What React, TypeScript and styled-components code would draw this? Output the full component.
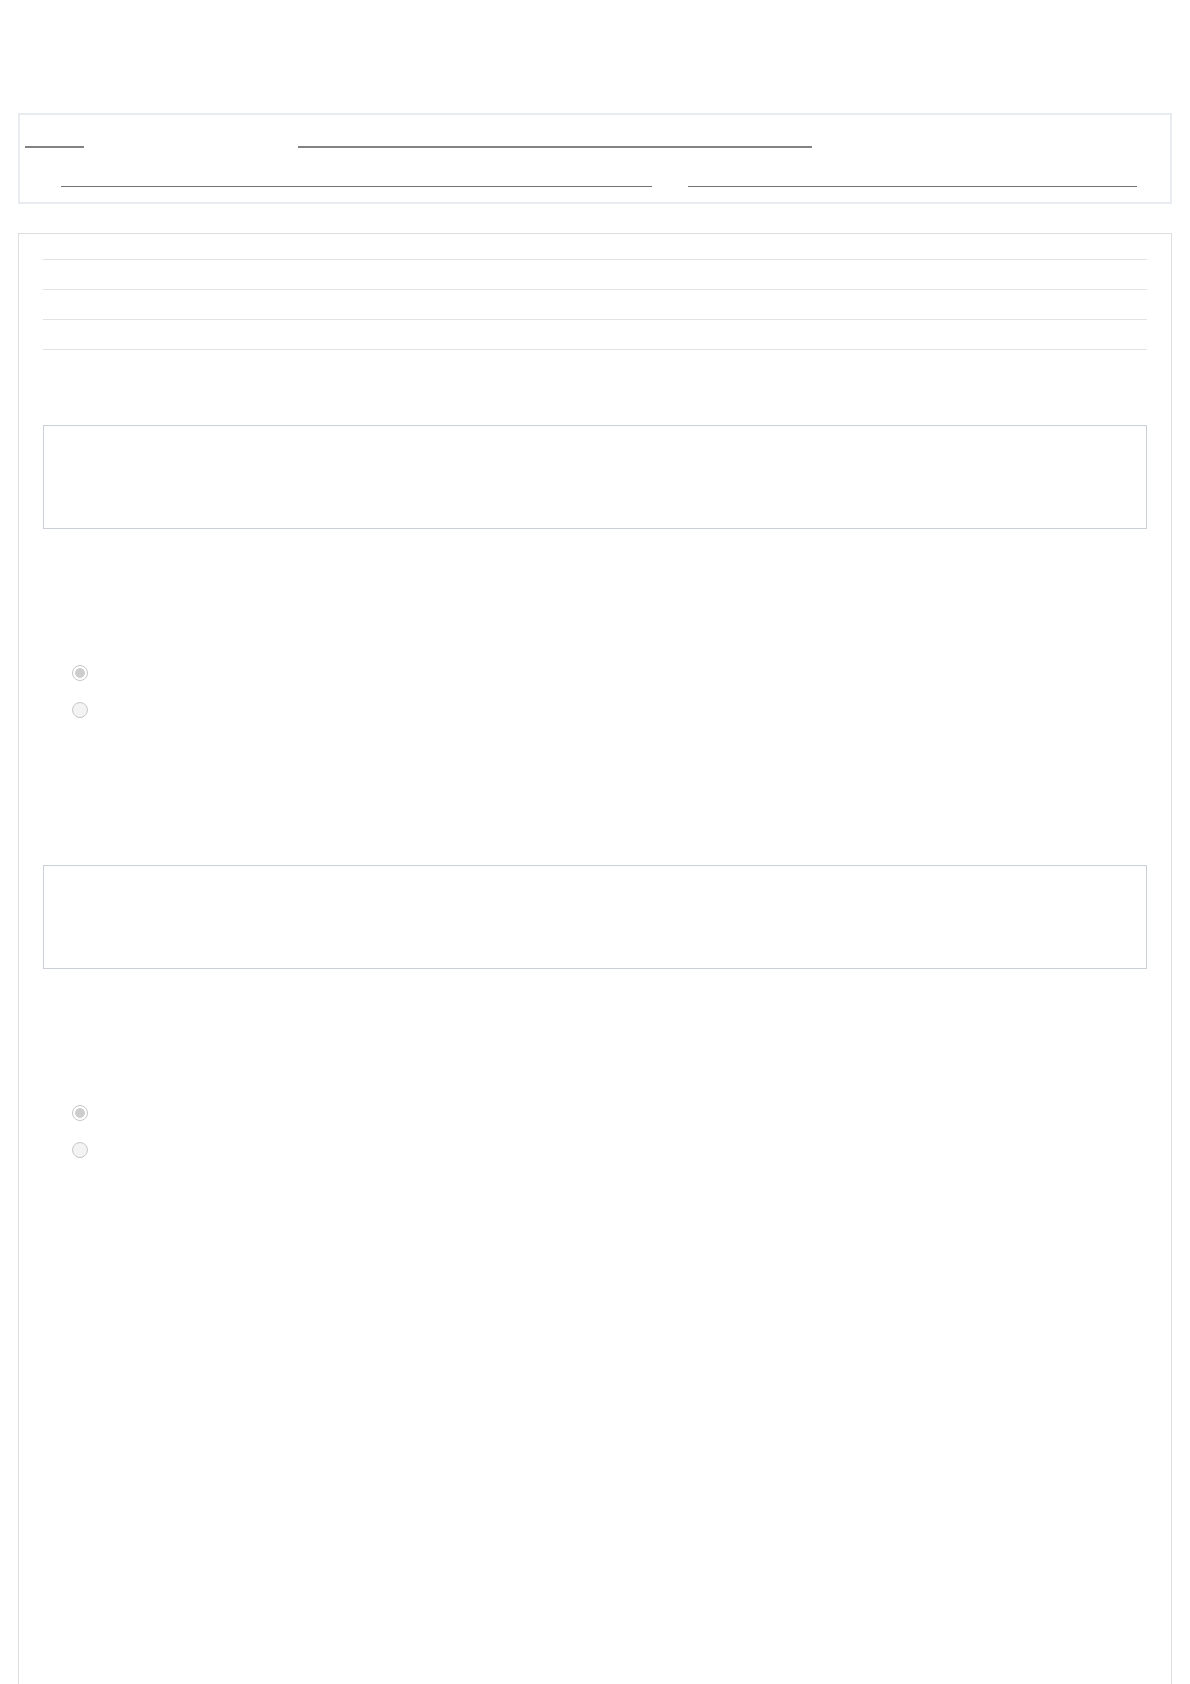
import styled, { createGlobalStyle } from "styled-components";

const GlobalStyle = createGlobalStyle`
  html, body {
    margin: 0;
    padding: 0;
    background: #ffffff;
    font-family: "Liberation Sans", Arial, sans-serif;
  }
  * {
    box-sizing: border-box;
  }
`;

const Page = styled.div`
  padding: 113px 18px 0;
`;

const Header = styled.div`
  border: 2px solid #e8ebef;
  padding: 0 5px 15px;
`;

const HeaderRow = styled.div<{ height: number; indent?: number }>`
  display: flex;
  align-items: flex-end;
  height: ${(p) => p.height}px;
  padding-left: ${(p) => p.indent || 0}px;
`;

const Blank = styled.span<{ width: number; gap?: number; thick?: boolean }>`
  display: block;
  width: ${(p) => p.width}px;
  margin-left: ${(p) => p.gap || 0}px;
  border-bottom: ${(p) => (p.thick ? "2px solid #828282" : "1px solid #737373")};
`;

const Sheet = styled.div`
  margin-top: 29px;
  min-height: 1451px;
  border: 1px solid #dedede;
  border-bottom: none;
  padding: 25px 24px 0;
`;

const InfoList = styled.ul`
  list-style: none;
  margin: 0;
  padding: 0;
  border-top: 1px solid #e3e3e3;
`;

const InfoItem = styled.li`
  height: 30px;
  border-bottom: 1px solid #e3e3e3;
`;

const Question = styled.section`
  margin-top: 75px;
  & + & {
    margin-top: 126px;
  }
`;

const Answer = styled.textarea`
  display: block;
  width: 100%;
  height: 104px;
  border: 1px solid #cbd0d8;
  border-radius: 0;
  resize: none;
  background: #fff;
  margin: 0;
`;

const Options = styled.div`
  margin-top: 136px;
  padding-left: 29px;
`;

const OptionRow = styled.label`
  display: flex;
  align-items: flex-start;
  height: 37px;
`;

const Radio = styled.input`
  appearance: none;
  -webkit-appearance: none;
  margin: 0;
  width: 16px;
  height: 16px;
  border-radius: 50%;
  border: 1px solid #c8c8c8;
  background: #f3f3f3;

  &:checked {
    border: 1.5px solid #c6c6c6;
    background: radial-gradient(circle, #cdcdcd 0 4.5px, #ffffff 5.2px);
  }
`;

function Block({ name }: { name: string }) {
  return (
    <Question>
      <Answer disabled />
      <Options>
        <OptionRow>
          <Radio type="radio" name={name} defaultChecked disabled />
        </OptionRow>
        <OptionRow>
          <Radio type="radio" name={name} disabled />
        </OptionRow>
      </Options>
    </Question>
  );
}

export default function App() {
  return (
    <>
      <GlobalStyle />
      <Page>
        <Header>
          <HeaderRow height={33}>
            <Blank thick width={59} />
            <Blank thick width={514} gap={214} />
          </HeaderRow>
          <HeaderRow height={39} indent={36}>
            <Blank width={591} />
            <Blank width={449} gap={36} />
          </HeaderRow>
        </Header>
        <Sheet>
          <InfoList>
            <InfoItem />
            <InfoItem />
            <InfoItem />
          </InfoList>
          <Block name="q1" />
          <Block name="q2" />
        </Sheet>
      </Page>
    </>
  );
}
